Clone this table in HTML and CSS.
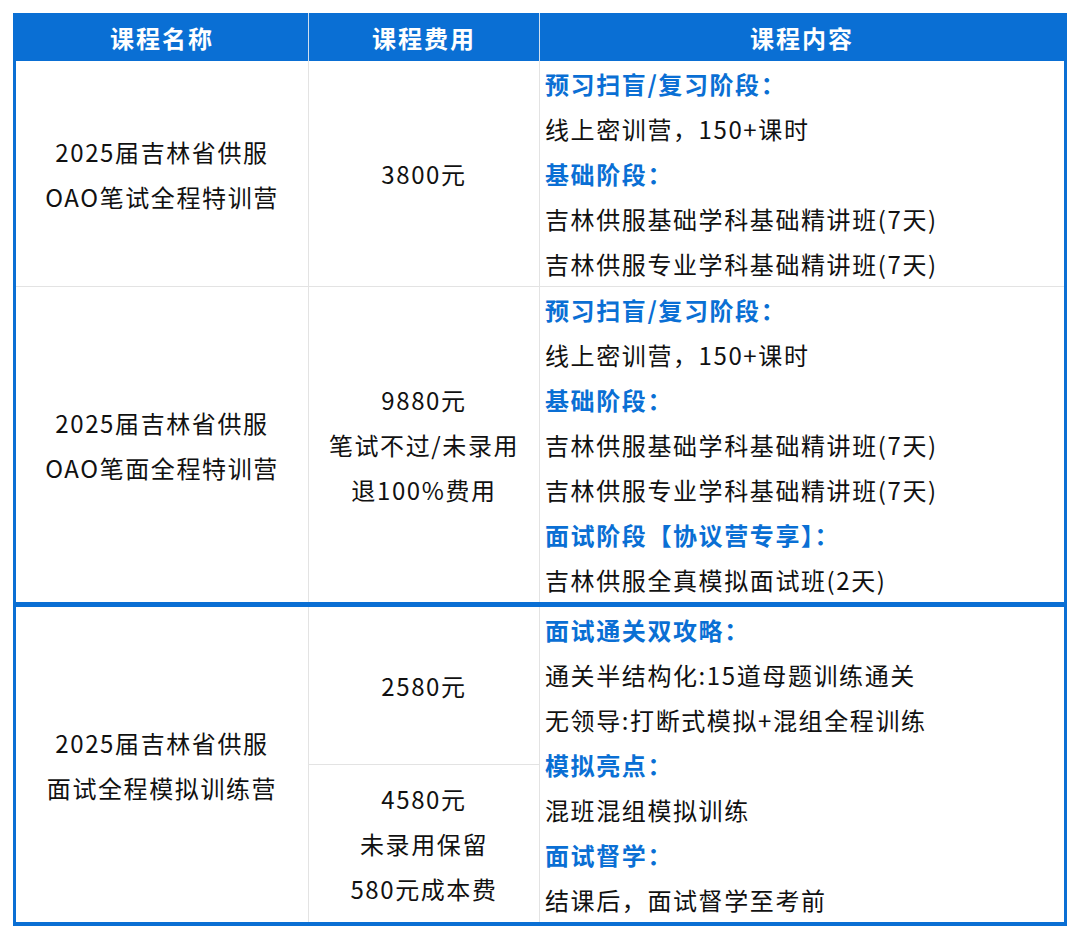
FILE: index.html
```html
<!DOCTYPE html>
<html lang="zh-CN">
<head>
<meta charset="utf-8">
<title>课程表</title>
<link rel="stylesheet" href="styles.css">
</head>
<body>
<div class="sheet">
  <div class="block block-top">
    <div class="row head">
      <div class="cell">课程名称</div>
      <div class="cell">课程费用</div>
      <div class="cell">课程内容</div>
    </div>
    <div class="row body-row">
      <div class="cell name"><div>2025届吉林省供服</div><div>OAO笔试全程特训营</div></div>
      <div class="cell fee"><div>3800元</div></div>
      <div class="cell content">
        <div class="ttl">预习扫盲/复习阶段：</div>
        <div>线上密训营，150+课时</div>
        <div class="ttl">基础阶段：</div>
        <div>吉林供服基础学科基础精讲班(7天)</div>
        <div>吉林供服专业学科基础精讲班(7天)</div>
      </div>
    </div>
    <div class="row body-row">
      <div class="cell name"><div>2025届吉林省供服</div><div>OAO笔面全程特训营</div></div>
      <div class="cell fee"><div>9880元</div><div>笔试不过/未录用</div><div>退100%费用</div></div>
      <div class="cell content">
        <div class="ttl">预习扫盲/复习阶段：</div>
        <div>线上密训营，150+课时</div>
        <div class="ttl">基础阶段：</div>
        <div>吉林供服基础学科基础精讲班(7天)</div>
        <div>吉林供服专业学科基础精讲班(7天)</div>
        <div class="ttl">面试阶段【协议营专享】：</div>
        <div>吉林供服全真模拟面试班(2天)</div>
      </div>
    </div>
  </div>
  <div class="block block-bottom">
    <div class="row body-row">
      <div class="cell name"><div>2025届吉林省供服</div><div>面试全程模拟训练营</div></div>
      <div class="cell fee-split">
        <div class="fee sub"><div>2580元</div></div>
        <div class="fee sub"><div>4580元</div><div>未录用保留</div><div>580元成本费</div></div>
      </div>
      <div class="cell content">
        <div class="ttl">面试通关双攻略：</div>
        <div>通关半结构化:15道母题训练通关</div>
        <div>无领导:打断式模拟+混组全程训练</div>
        <div class="ttl">模拟亮点：</div>
        <div>混班混组模拟训练</div>
        <div class="ttl">面试督学：</div>
        <div>结课后，面试督学至考前</div>
      </div>
    </div>
  </div>
</div>
</body>
</html>
```

FILE: styles.css
```css
* { box-sizing: border-box; }
html, body { margin: 0; padding: 0; background: #ffffff; }
body {
  font-family: "Noto Sans CJK SC", "Noto Sans", sans-serif;
  color: #111111;
  font-size: 24px;
  letter-spacing: 1.6px;
}
.sheet {
  margin: 13px 0 0 13px;
  width: 1054px;
}
.block {
  border-left: 3px solid #0a6fd4;
  border-right: 3px solid #0a6fd4;
}
.block-top { border-bottom: 2px solid #0a6fd4; }
.block-bottom { border-top: 3px solid #0a6fd4; border-bottom: 4px solid #0a6fd4; }
.row {
  display: grid;
  grid-template-columns: 292px 231px 1fr;
}
.head {
  background: #0a6fd4;
  height: 48px;
  color: #ffffff;
  font-weight: bold;
  font-size: 24px;
  letter-spacing: 2px;
}
.head .cell {
  display: flex;
  align-items: center;
  justify-content: center;
}
.head .cell + .cell { border-left: 1px solid #cfdff0; }
.body-row + .body-row { border-top: 1px solid #e3e3e3; }
.body-row .cell + .cell { border-left: 1px solid #e3e3e3; }
.cell { line-height: 45px; }
.name, .fee {
  display: flex;
  flex-direction: column;
  justify-content: center;
  align-items: center;
  text-align: center;
}
.fee-split {
  display: flex;
  flex-direction: column;
}
.fee.sub { flex: 1; }
.fee.sub + .fee.sub { border-top: 1px solid #e3e3e3; }
.content {
  padding-left: 5px;
  white-space: nowrap;
}
.ttl {
  color: #0a6fd4;
  font-weight: bold;
}
```
